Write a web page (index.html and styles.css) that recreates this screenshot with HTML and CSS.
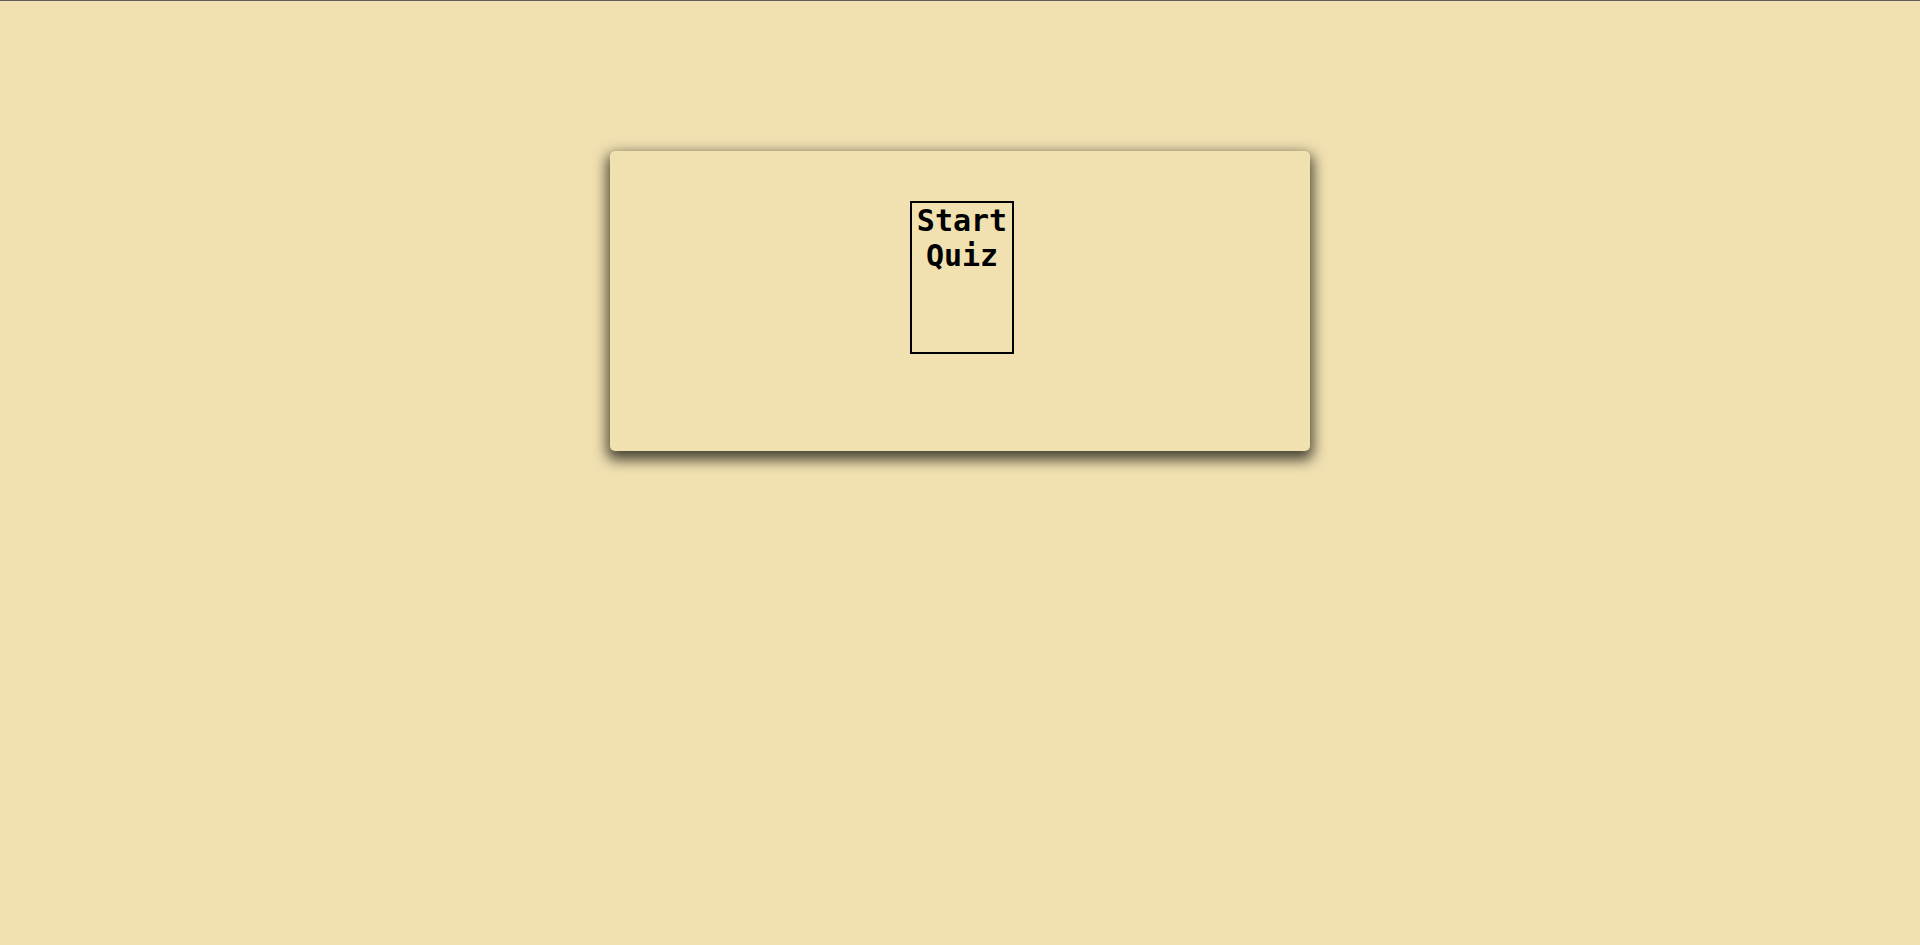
FILE: index.html
```html
<!DOCTYPE html>
<html lang="en">
<head>
<meta charset="utf-8">
<title>Quiz</title>
<link rel="stylesheet" href="styles.css">
</head>
<body>
<div class="topline"></div>
<main class="page">
  <section class="card">
    <div class="start-btn">Start Quiz</div>
  </section>
</main>
</body>
</html>
```
FILE: styles.css
```css
html, body {
  margin: 0;
  padding: 0;
  background: #f1e1b1;
  height: 100%;
}
body {
  font-family: "DejaVu Sans Mono", "Liberation Mono", monospace;
}
.topline {
  height: 1px;
  background: #5f5f5f;
}
.page {
  display: flex;
  justify-content: center;
  padding-top: 150px;
}
.card {
  width: 700px;
  height: 300px;
  box-sizing: border-box;
  background: #f1e1b1;
  border-radius: 5px;
  box-shadow: 0 6px 14px 3px rgba(0, 0, 0, 0.7);
  display: flex;
  justify-content: center;
  align-items: flex-start;
  padding-top: 50px;
}
.start-btn {
  width: 104px;
  height: 153px;
  box-sizing: border-box;
  margin-left: 4px;
  border: 2px solid #000;
  color: #000;
  font-size: 30px;
  font-weight: bold;
  text-align: center;
  line-height: normal;
}
```
